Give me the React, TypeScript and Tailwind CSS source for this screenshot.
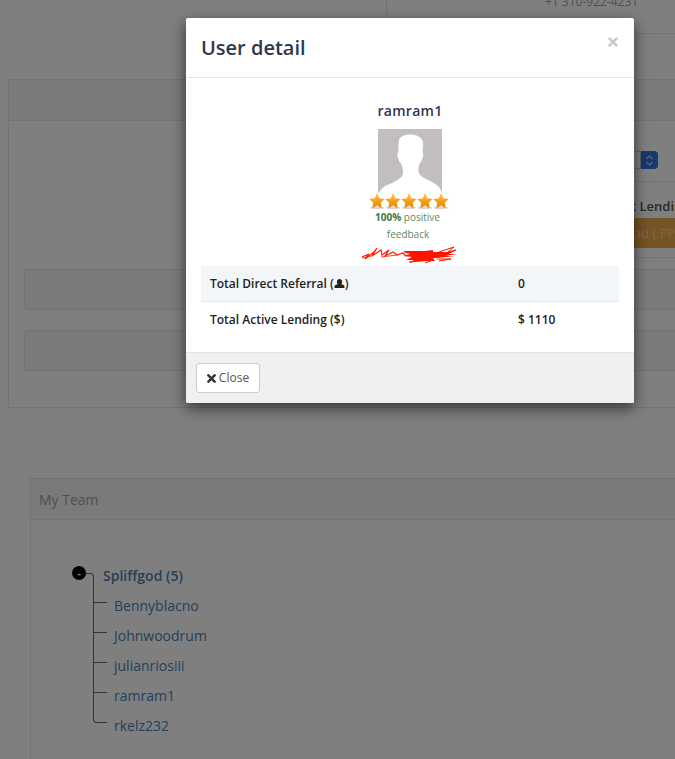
import { FaTimes } from "react-icons/fa";

const team = ["Bennyblacno", "Johnwoodrum", "julianriosiii", "ramram1", "rkelz232"];

function Star({ id }: { id: string }) {
  return (
    <svg width="16" height="16" viewBox="0 0 16 16">
      <defs>
        <linearGradient id={id} x1="0" y1="0" x2="0" y2="1">
          <stop offset="0" stopColor="#ffc83a" />
          <stop offset="1" stopColor="#ec7f05" />
        </linearGradient>
      </defs>
      <ellipse cx="8" cy="14.8" rx="7.500" ry="1.200" fill="#d8d5d0" />
      <path d="M8 .3l2.300 4.900 5.500.8-4 3.800 1 5.400L8 12.500l-4.800 2.700 1-5.400-4-3.800 5.500-.8z" fill={`url(#${id})`} />
    </svg>
  );
}

function Avatar() {
  return (
    <svg width="64" height="64" viewBox="0 0 64 64" className="block">
      <rect width="64" height="64" fill="#c2bebe" />
      <path
        d="M21 12C21 8 26 5.500 32 5.500S44 8 45 13C45.300 17 45 20 44.500 23C45.500 24 45.500 27 44.500 29C44 31 43 33 41.500 35C40.500 37 40 40 40.500 43C41.500 46 44 48 48 50C53 52 58 55 61 58C62.500 60 63.500 62 64 64H1C2 61 4 59 7 57C11 55 17 53 21 50C24 48 25 46 25 43C25 40 24.500 37 23 35C21.500 33 20.500 31 20 29C19 27 19.200 24 20.500 23C20 19 20.500 15 21 12z"
        fill="#ffffff"
      />
    </svg>
  );
}

function Scribble() {
  return (
    <svg width="98" height="18" viewBox="0 0 98 18" className="block">
      <path
        d="M1 11l7-3-4 5 9-7 3-4-5 8 9-6 1 5 7-5-4 6 8-4 4 3 6-2 3 3"
        fill="none"
        stroke="#ff1a00"
        strokeWidth="1.200"
      />
      <path d="M1 12l10-2M20 11l16-2" fill="none" stroke="#ff1a00" strokeWidth="0.800" />
      <path
        d="M44 5h20l8-1v2h20l-6 2h10l-12 2h10l-18 2h-4l2 3H56l-8 2 5-3h-8l6-3-9-1 7-2-7-2z"
        fill="#ff1400"
      />
      <path
        d="M78 6l15-5-6 5 8-2-9 4M48 16l24-2-8 3M76 13l14 0-12 2"
        fill="none"
        stroke="#ff1400"
        strokeWidth="1"
      />
    </svg>
  );
}

function BackgroundPage() {
  return (
    <div className="h-[759px] overflow-hidden bg-white font-['Open_Sans',sans-serif] text-[14px] text-[#555]">
      {/* contact table, top right */}
      <div className="ml-[386px] h-[79px]">
        <div className="h-[34px] border-b border-l border-[#e4e7ea]">
          <p className="ml-[158px] -translate-y-[7px] text-[12px] leading-[18px] whitespace-nowrap text-[#a0a0a0]">
            +1 310-922-4231
          </p>
        </div>
      </div>

      <div className="ml-[8px] w-[720px] border border-[#e4e7ea]">
        <div className="h-[41px] rounded-t-[3px] border-b border-[#e4e7ea] bg-[#f3f6f9]" />
        <div className="h-[286px] px-[15px]">
          <div className="ml-[500px]">
            <div className="flex h-[61px] items-start border-b border-[#e4e7ea] pt-[30px] pl-[100px]">
              <div className="h-[18px] w-[17px] rounded-l-[1px] border border-[#ccc]" />
              <div className="flex h-[18px] w-[17px] items-center justify-center rounded-r-[4px] bg-[#2f72e0]">
                <svg width="9" height="13" viewBox="0 0 9 13" fill="none" stroke="#b9cbe8" strokeWidth="1.300">
                  <path d="M1.500 5l3-3 3 3M1.500 8l3 3 3-3" />
                </svg>
              </div>
            </div>
            <div className="h-[76px] border-b border-[#e4e7ea] pt-[15px]">
              <p className="pl-[107px] text-[13px] leading-[18px] font-semibold whitespace-nowrap text-[#555]">
                t Lending
              </p>
              <div className="mt-[3px] h-[30px] bg-[#eaa84a] pl-[110px] text-[13px] leading-[30px] whitespace-nowrap text-white/50">
                ad (.PPT)
              </div>
            </div>
          </div>
          <div className="mt-[11px] h-[41px] w-[700px] rounded-[3px] border border-[#e4e7ea] bg-[#f3f6f9]" />
          <div className="mt-[20px] h-[41px] w-[700px] rounded-[3px] border border-[#e4e7ea] bg-[#f3f6f9]" />
        </div>
      </div>

      <div className="ml-[30px] mt-[70px] w-[700px]">
        <div className="h-[42px] border border-[#e4e7ea] bg-[#f5f5f5] pl-[8px] text-[14px] leading-[42px] text-[#a0a0a0]">
          My Team
        </div>
        <div className="h-[240px] border-l border-[#e4e7ea] pl-[41px] pt-[41px]">
          <div className="flex h-[30px] items-start">
            <span className="mt-[5px] flex h-[14px] w-[14px] items-center justify-center rounded-full bg-black text-[10px] leading-none font-bold text-white">
              -
            </span>
            <span className="mt-[12px] h-[18px] w-[8px] rounded-tr-[4px] border-t border-r border-[#666]" />
            <a className="ml-[9px] text-[14px] leading-[30px] font-semibold text-[#4a7fb5]">Spliffgod (5)</a>
          </div>
          <ul className="ml-[21px]">
            {team.map((name, index) => (
              <li key={name} className="flex h-[30px] items-stretch">
                <div className="flex w-[14px] flex-col">
                  <div
                    className={
                      index < team.length - 1
                        ? "h-[12px] border-b border-l border-[#666]"
                        : "h-[12px] rounded-bl-[4px] border-b border-l border-[#666]"
                    }
                  />
                  {index < team.length - 1 && <div className="flex-1 border-l border-[#666]" />}
                </div>
                <a className="ml-[7px] text-[14px] leading-[30px] text-[#4a7fb5]">{name}</a>
              </li>
            ))}
          </ul>
        </div>
      </div>
    </div>
  );
}

function UserDetailModal() {
  return (
    <div className="absolute left-[186px] top-[18px] w-[448px] rounded-[2px] bg-white font-['Open_Sans',sans-serif] shadow-[0_5px_15px_rgba(0,0,0,0.6)]">
      <div className="relative h-[60px] border-b border-[#e5e5e5] px-[15px] pt-[15px]">
        <h4 className="text-[20px] leading-[30px] font-semibold text-[#2f3650]">User detail</h4>
        <FaTimes className="absolute right-[16px] top-[17px] h-[14px] w-[10px] text-[#c8c8c8]" />
      </div>

      <div className="px-[15px] pb-[14px] pt-[24px]">
        <div className="flex flex-col items-center">
          <h5 className="text-[14px] leading-[18px] font-semibold tracking-[0.3px] text-[#2f3650]">ramram1</h5>
          <div className="mt-[9px]">
            <Avatar />
          </div>
          <div className="-ml-[2px] flex">
            {[0, 1, 2, 3, 4].map((n) => (
              <Star key={n} id={`star-${n}`} />
            ))}
          </div>
          <p className="-ml-[5px] text-[10px] leading-[17px] text-[#5a8a5f]">
            <b className="font-bold text-[#3b7a43]">100%</b> positive
          </p>
          <p className="-ml-[4px] text-[10px] leading-[17px] text-[#5a8a5f]">feedback</p>
          <div className="mt-[3px] h-[17px]">
            <Scribble />
          </div>
        </div>

        <div className="mt-[3px] text-[12px] font-semibold text-[#222]">
          <div className="grid h-[36px] grid-cols-[308px_1fr] items-center border-b border-[#e6eaee] bg-[#f3f6f9] pl-[9px]">
            <span className="flex items-center">
              Total Direct Referral (
              <svg width="11" height="11" viewBox="0 0 11 11" fill="#222">
                <path d="M5.500 1a2.600 2.600 0 0 1 2.600 3c0 1-.6 2-1 2.300 1.900.3 3.400 1 3.400 2.700v1H.5V9c0-1.700 1.500-2.400 3.400-2.700-.4-.3-1-1.300-1-2.300A2.600 2.600 0 0 1 5.500 1z" />
              </svg>
              )
            </span>
            <span>0</span>
          </div>
          <div className="grid h-[36px] grid-cols-[308px_1fr] items-center pl-[9px]">
            <span>Total Active Lending ($)</span>
            <span>$ 1110</span>
          </div>
        </div>
      </div>

      <div className="h-[51px] rounded-b-[2px] border-t border-[#e2e2e2] bg-[#f0f0f0] px-[10px] pt-[10px]">
        <button className="flex h-[30px] w-[64px] items-center justify-center gap-[3px] rounded-[3px] border border-[#ccc] bg-white text-[12px] text-[#555]">
          <FaTimes className="h-[13px] w-[9px] text-[#333]" />
          Close
        </button>
      </div>
    </div>
  );
}

export default function App() {
  return (
    <div className="relative h-[759px] overflow-hidden">
      <BackgroundPage />
      <div className="absolute inset-0 bg-black/50" />
      <UserDetailModal />
    </div>
  );
}
